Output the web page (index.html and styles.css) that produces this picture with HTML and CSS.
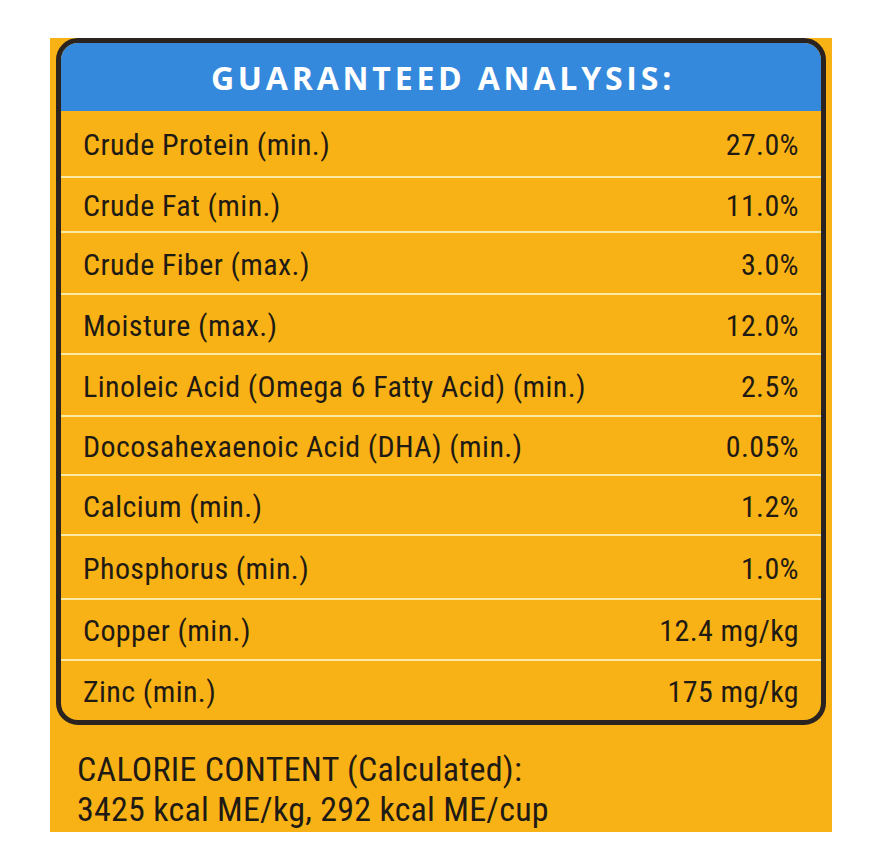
FILE: index.html
```html
<!DOCTYPE html>
<html lang="en">
<head>
<meta charset="utf-8">
<title>Guaranteed Analysis</title>
<link rel="stylesheet" href="styles.css">
</head>
<body>
<div class="panel">
  <div class="analysis">
    <div class="analysis-head">GUARANTEED ANALYSIS:</div>
    <div class="row"><span>Crude Protein (min.)</span><span>27.0%</span></div>
    <div class="row"><span>Crude Fat (min.)</span><span>11.0%</span></div>
    <div class="row"><span>Crude Fiber (max.)</span><span>3.0%</span></div>
    <div class="row"><span>Moisture (max.)</span><span>12.0%</span></div>
    <div class="row"><span>Linoleic Acid (Omega 6 Fatty Acid) (min.)</span><span>2.5%</span></div>
    <div class="row"><span>Docosahexaenoic Acid (DHA) (min.)</span><span>0.05%</span></div>
    <div class="row"><span>Calcium (min.)</span><span>1.2%</span></div>
    <div class="row"><span>Phosphorus (min.)</span><span>1.0%</span></div>
    <div class="row"><span>Copper (min.)</span><span>12.4 mg/kg</span></div>
    <div class="row"><span>Zinc (min.)</span><span>175 mg/kg</span></div>
  </div>
  <p class="calorie">CALORIE CONTENT (Calculated):<br>3425 kcal ME/kg, 292 kcal ME/cup</p>
</div>
</body>
</html>
```

FILE: styles.css
```css
html, body {
  margin: 0;
  padding: 0;
  background: #ffffff;
}
body {
  width: 876px;
  height: 868px;
  padding-top: 38px;
  box-sizing: border-box;
}
.panel {
  margin-left: 50px;
  width: 782px;
  height: 794px;
  background: #f9b215;
  box-sizing: border-box;
  padding: 0 6px;
  font-family: "Roboto Condensed", "Liberation Sans Narrow", "Arial Narrow", "DejaVu Sans Condensed", sans-serif;
  color: #1f1a14;
}
.analysis {
  border: 5px solid #2a231f;
  border-radius: 22px;
  overflow: hidden;
}
.analysis-head {
  height: 68px;
  background: #3489dc;
  color: #ffffff;
  font-family: "Open Sans", sans-serif;
  font-weight: 700;
  font-size: 32px;
  letter-spacing: 3.8px;
  padding-left: 4px;
  box-sizing: border-box;
  display: flex;
  align-items: center;
  justify-content: center;
}
.row {
  display: flex;
  align-items: center;
  justify-content: space-between;
  padding: 2px 22px 0;
  box-sizing: border-box;
  height: 61px;
  font-size: 30px;
  letter-spacing: 0.4px;
  border-top: 2px solid #fbe9a6;
}
.analysis-head + .row {
  border-top: none;
  height: 65px;
}
.row:nth-child(3) { height: 55px; }
.row:nth-child(4) { height: 62px; }
.row:nth-child(5) { height: 60px; }
.row:nth-child(6) { height: 62px; }
.row:nth-child(7) { height: 59px; }
.row:nth-child(8) { height: 60px; }
.row:nth-child(9) { height: 64px; }
.calorie {
  margin: 0;
  padding: 24px 0 0 21px;
  font-size: 34px;
  line-height: 40px;
  letter-spacing: 0.25px;
}
```
